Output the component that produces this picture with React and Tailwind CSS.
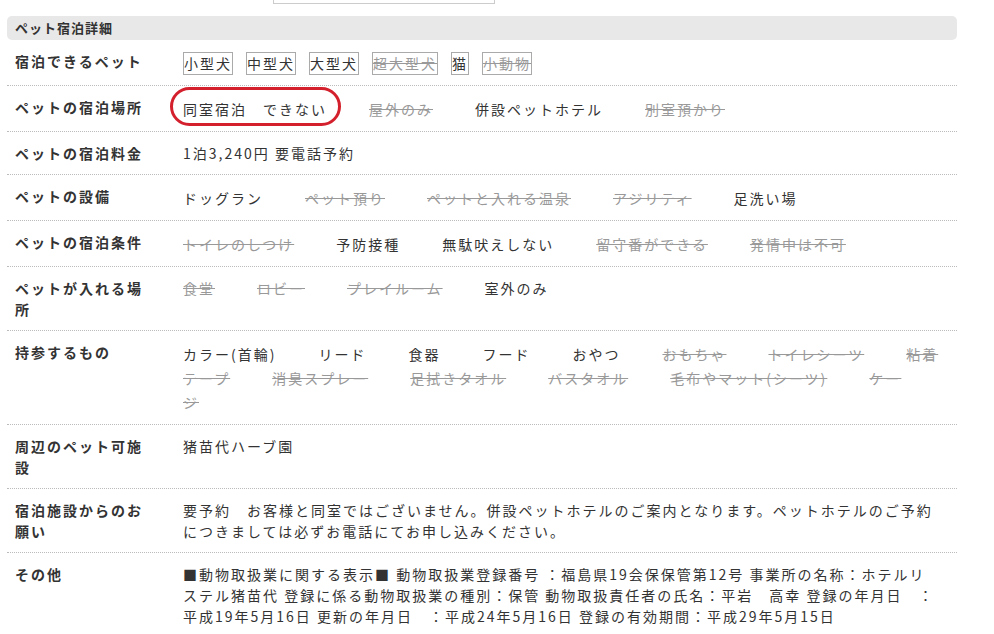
const ON = 'text-[#333]'
const OFF = 'text-[#999] line-through'

const boxPets = [
  ['小型犬', true],
  ['中型犬', true],
  ['大型犬', true],
  ['超大型犬', false],
  ['猫', true],
  ['小動物', false],
]

const places = [
  ['屋外のみ', false],
  ['併設ペットホテル', true],
  ['別室預かり', false],
]

const facilities = [
  ['ドッグラン', true],
  ['ペット預り', false],
  ['ペットと入れる温泉', false],
  ['アジリティ', false],
  ['足洗い場', true],
]

const conditions = [
  ['トイレのしつけ', false],
  ['予防接種', true],
  ['無駄吠えしない', true],
  ['留守番ができる', false],
  ['発情中は不可', false],
]

const areas = [
  ['食堂', false],
  ['ロビー', false],
  ['プレイルーム', false],
  ['室外のみ', true],
]

const belongings = [
  ['カラー(首輪)', true],
  ['リード', true],
  ['食器', true],
  ['フード', true],
  ['おやつ', true],
  ['おもちゃ', false],
  ['トイレシーツ', false],
  ['粘着テープ', false],
  ['消臭スプレー', false],
  ['足拭きタオル', false],
  ['バスタオル', false],
  ['毛布やマット(シーツ)', false],
  ['ケージ', false],
]

function Items({list}){
  return (
    <>
      {list.map(([t, on]) => (
        <span key={t} className={`mr-[42px] ${on ? ON : OFF}`}>{t}</span>
      ))}
    </>
  )
}

function Row({label, children, tall, narrow}){
  return (
    <div className="flex pt-[11px] pb-[10px] border-b border-dotted border-[#bbb]">
      <div className="w-[176px] shrink-0 pl-[8px] pr-[32px] font-bold text-[#333] leading-[21px]">
        {label}
      </div>
      <div className={`text-[#333] ${narrow ? 'w-[755px]' : 'w-[765px]'} ${tall ? 'leading-[24px]' : 'leading-[21px]'}`}>
        {children}
      </div>
    </div>
  )
}

export default function App(){
  return (
    <main
      className="w-[994px] h-[634px] overflow-hidden bg-white text-[14px] tracking-[2px]"
      style={{fontFamily: '"Noto Sans CJK JP", "Noto Sans", sans-serif'}}
    >
      {/* top of a search box, cut off */}
      <div className="h-[16px]">
        <div className="ml-[273px] w-[222px] h-[4px] border border-t-0 border-[#ccc]"></div>
      </div>

      <div className="ml-[7px] w-[950px]">
        <div className="h-[24px] rounded-[5px] bg-[#e8e8e8] pl-[8px] text-[13px] font-bold tracking-[1px] leading-[24px] text-[#333]">
          ペット宿泊詳細
        </div>

        <Row label="宿泊できるペット" tall>
          <div className="flex gap-[13px] items-center h-[24px]">
            {boxPets.map(([t, on]) => (
              <span key={t} className={`border border-[#aaa] h-[23px] leading-[21px] ${on ? ON : OFF}`}>{t}</span>
            ))}
          </div>
        </Row>

        <Row label="ペットの宿泊場所" tall>
          <span className="relative inline-block mr-[42px] leading-[24px]">
            同室宿泊　できない
            <span className="absolute -left-[13px] -right-[14px] -top-[10px] -bottom-[5px] border-[3px] border-[#d3202c] rounded-[20px]"></span>
          </span>
          <Items list={places} />
        </Row>

        <Row label="ペットの宿泊料金">1泊3,240円 要電話予約</Row>

        <Row label="ペットの設備" tall><Items list={facilities} /></Row>

        <Row label="ペットの宿泊条件" tall><Items list={conditions} /></Row>

        <Row label="ペットが入れる場所" ><Items list={areas} /></Row>

        <Row label="持参するもの" tall><Items list={belongings} /></Row>

        <Row label="周辺のペット可施設">猪苗代ハーブ園</Row>

        <Row label="宿泊施設からのお願い">
          要予約　お客様と同室ではございません。併設ペットホテルのご案内となります。ペットホテルのご予約につきましては必ずお電話にてお申し込みください。
        </Row>

        <Row label="その他" narrow>
          ■動物取扱業に関する表示■ 動物取扱業登録番号 ：福島県19会保保管第12号 事業所の名称：ホテルリステル猪苗代 登録に係る動物取扱業の種別：保管 動物取扱責任者の氏名：平岩　高幸 登録の年月日　：平成19年5月16日 更新の年月日　：平成24年5月16日 登録の有効期間：平成29年5月15日
        </Row>
      </div>
    </main>
  )
}
